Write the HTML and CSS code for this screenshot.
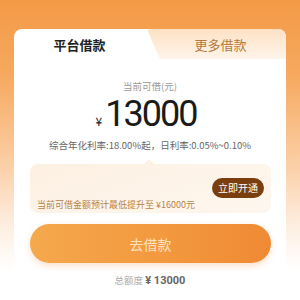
FILE: index.html
```html
<html>
  <head>
    <link rel="stylesheet" href="styles.css">
    <title>借款</title>
  </head>
  <body>
    <div class="page">
      <div class="card">
        <div class="tabs">
          <div class="tab active">平台借款</div>
          <div class="tab more">更多借款</div>
        </div>
        <div class="label">当前可借(元)</div>
        <div class="amount"><span class="yen">¥</span><span class="num">13000</span></div>
        <div class="rate">综合年化利率:18.00%起，日利率:0.05%~0.10%</div>
        <div class="tip">
          <div class="tip-btn">立即开通</div>
          <div class="tip-text">当前可借金额预计最低提升至 ¥16000元</div>
        </div>
        <div class="go">去借款</div>
        <div class="total">总额度 <b>¥ 13000</b></div>
      </div>
    </div>
  </body>
</html>
```
FILE: styles.css
```css
body {
  margin: 0;
  font-family: "Noto Sans CJK SC", "Noto Sans", sans-serif;
}
.page {
  width: 300px;
  height: 300px;
  overflow: hidden;
  padding-top: 29px;
  box-sizing: border-box;
  background: linear-gradient(180deg, #f39a46 0%, #f6a95f 25%, #fbcfa6 55%, #fdeee0 75%, #fff 90%);
}
.card {
  margin: 0 14px;
  height: 290px;
  background: #fff;
  border-radius: 8px 8px 0 0;
  display: flex;
  flex-direction: column;
  align-items: center;
}
.tabs {
  align-self: stretch;
  display: flex;
  height: 30px;
}
.tab {
  flex: 1;
  display: flex;
  align-items: center;
  justify-content: center;
  font-size: 13px;
  line-height: 1;
}
.active {
  color: #222;
  font-weight: bold;
  padding-top: 1px;
}
.more {
  color: #b37a3c;
  background: linear-gradient(180deg, #fde2c4, #fef4ea);
  border-radius: 6px 8px 0 0;
  clip-path: polygon(0 0, 100% 0, 100% 100%, 15px 100%, 6px 10px, 3px 2px);
  padding-left: 10px;
  padding-top: 1px;
}
.label {
  margin-top: 20px;
  font-size: 9.5px;
  color: #999;
  line-height: 14px;
}
.amount {
  margin-top: 1px;
  display: flex;
  align-items: baseline;
  margin-left: -8px;
}
.yen {
  font-size: 12px;
  color: #222;
  margin-right: 3px;
}
.num {
  font-family: Roboto, sans-serif;
  font-size: 36px;
  letter-spacing: -2px;
  color: #1a1a1a;
  line-height: 40px;
}
.rate {
  margin-top: 4px;
  font-size: 9.5px;
  color: #666;
  line-height: 14px;
}
.tip {
  position: relative;
  margin-top: 12px;
  align-self: stretch;
  margin-left: 16px;
  margin-right: 15px;
  height: 49px;
  background: linear-gradient(160deg, #fdf0e2, #fef7ef);
  border-radius: 8px;
  box-sizing: border-box;
  padding: 14px 7px 0 7px;
  display: flex;
  flex-direction: column;
}
.tip::before {
  content: "";
  position: absolute;
  top: -5px;
  left: 114px;
  border: 5px solid transparent;
  border-top: 0;
  border-bottom-color: #fdf1e4;
}
.tip-btn {
  align-self: flex-end;
  background: #7b3f0f;
  color: #fff;
  font-size: 10px;
  line-height: 20px;
  padding: 0 6px;
  border-radius: 10px;
}
.tip-text {
  margin-top: 1px;
  font-size: 9px;
  color: #b98445;
  line-height: 12px;
}
.go {
  margin-top: 11px;
  align-self: stretch;
  margin-left: 16px;
  margin-right: 15px;
  height: 39px;
  border-radius: 20px;
  background: linear-gradient(90deg, #f5a84c, #f39a40 50%, #ef8a34);
  box-shadow: 0 3px 6px rgba(240, 140, 60, 0.25);
  color: #fde3c0;
  font-size: 14px;
  display: flex;
  align-items: center;
  justify-content: center;
}
.total {
  margin-top: 10px;
  font-size: 9.5px;
  color: #aaa;
  line-height: 14px;
}
.total b {
  color: #666;
  font-family: Roboto, sans-serif;
  font-size: 11px;
}
```
